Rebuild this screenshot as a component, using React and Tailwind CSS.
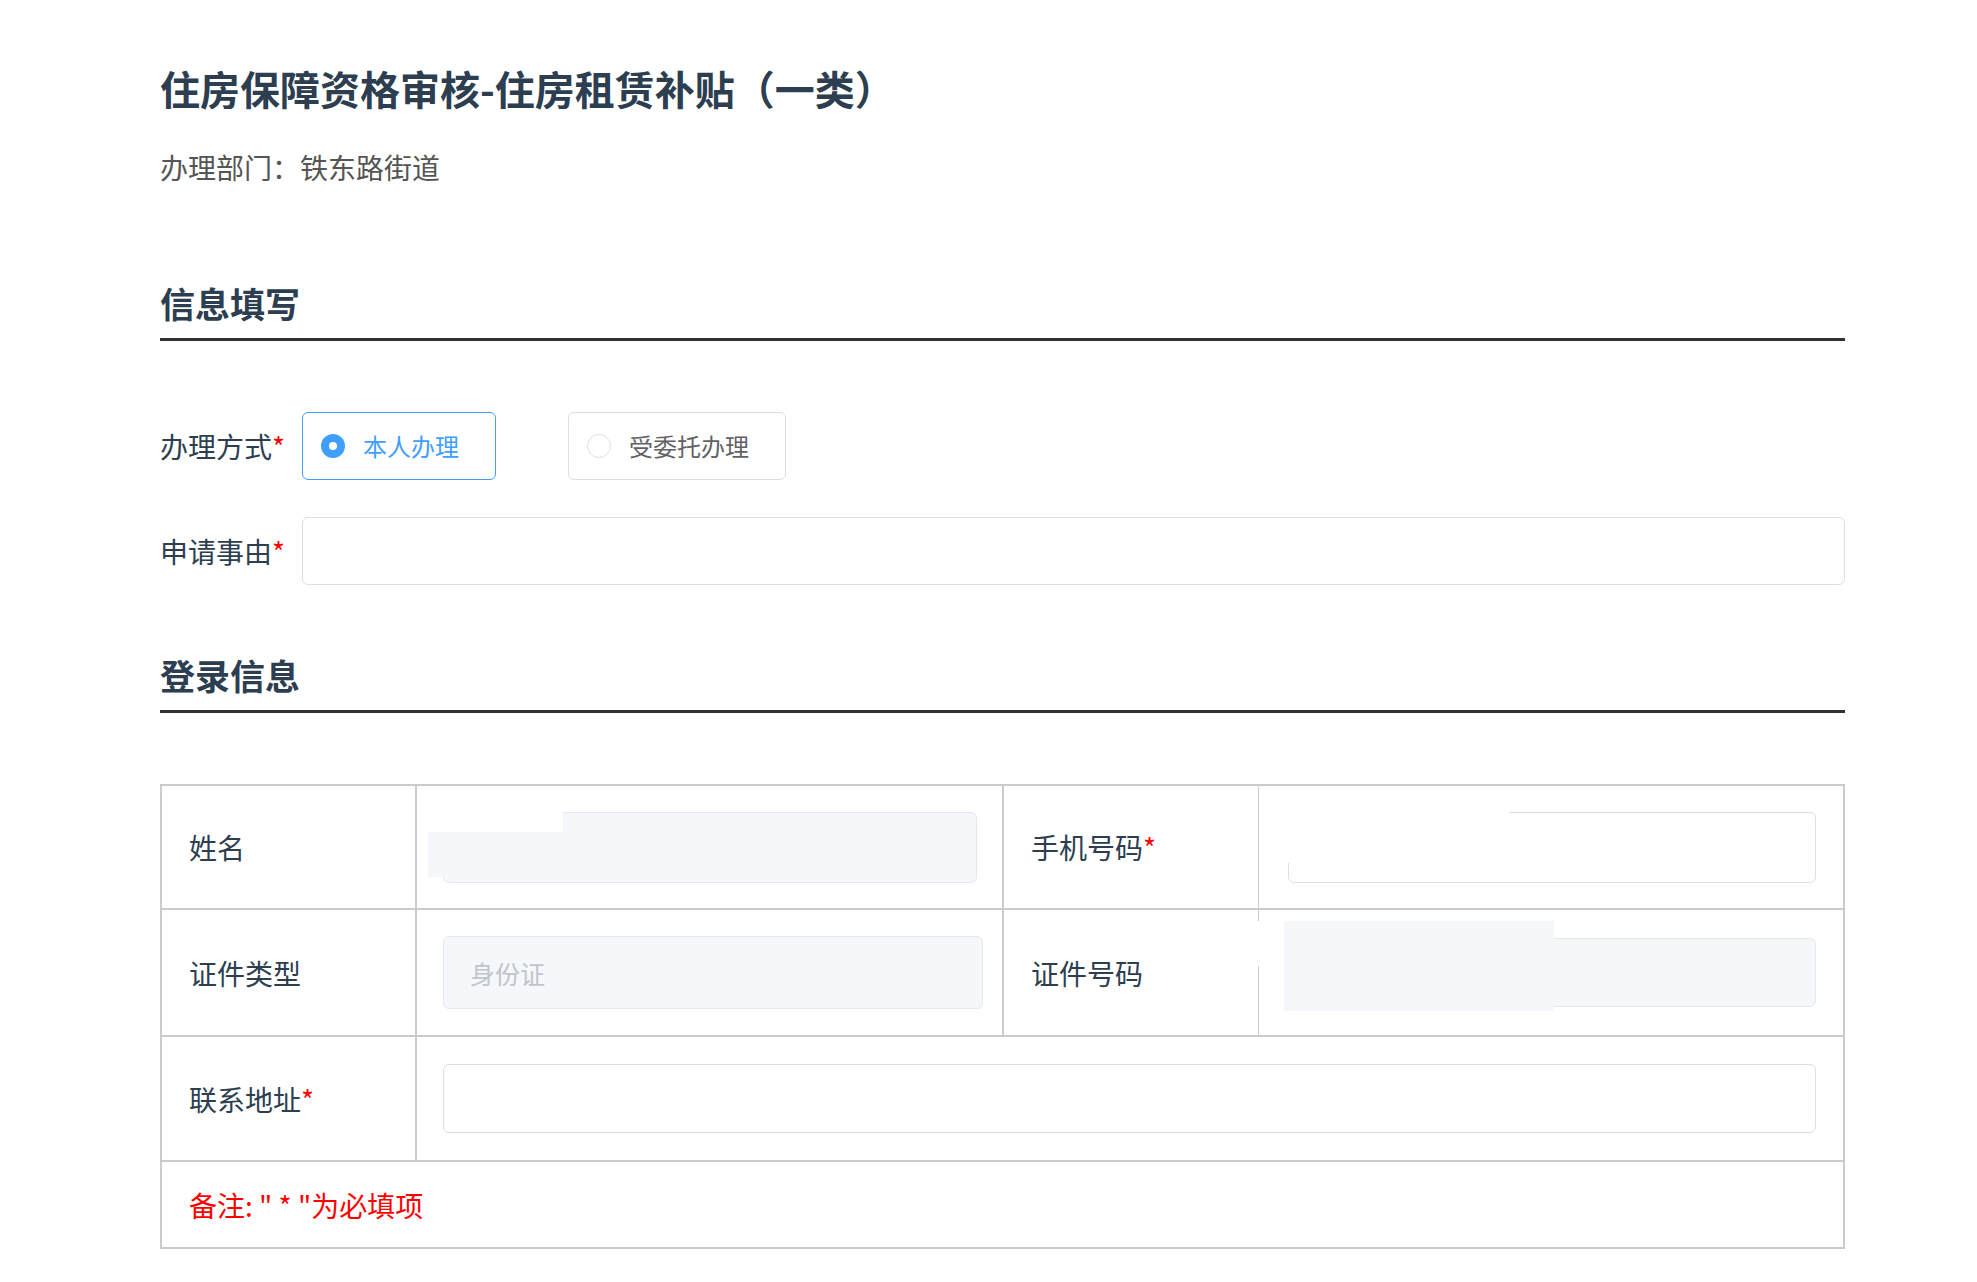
import React, { useState } from "react";

const Star = () => <span className="text-[#ff0000]">*</span>;

const App = () => {
  const [mode, setMode] = useState("self");
  const [reason, setReason] = useState("");
  const [phone, setPhone] = useState("");
  const [address, setAddress] = useState("");

  const modes = [
    { key: "self", label: "本人办理", w: "w-[194px]" },
    { key: "proxy", label: "受委托办理", w: "w-[218px]" },
  ];

  return (
    <div className="min-h-screen bg-white font-['Noto_Sans_CJK_SC','Noto_Sans',sans-serif] text-[#2c3e50]">
      <div className="ml-[160px] w-[1685px] pt-[68px] pb-[40px]">
        <h1 className="text-[40px] leading-[40px] font-bold">住房保障资格审核-住房租赁补贴（一类）</h1>
        <p className="mt-[45px] text-[28px] leading-[28px] text-[#555]">办理部门：铁东路街道</p>

        <div className="mt-[104px] border-b-[3px] border-[#303133] pb-[18px]">
          <h2 className="text-[35px] leading-[35px] font-bold">信息填写</h2>
        </div>

        <div className="mt-[71px] flex items-center">
          <div className="w-[142px] text-[28px] leading-[28px]">办理方式<Star /></div>
          <div className="flex gap-[72px]">
            {modes.map((item) => {
              const on = mode === item.key;
              return (
                <button
                  key={item.key}
                  onClick={() => setMode(item.key)}
                  className={
                    on
                      ? `${item.w} h-[68px] flex items-center pl-[18px] rounded-[6px] border border-[#409eff] bg-white`
                      : `${item.w} h-[68px] flex items-center pl-[18px] rounded-[6px] border border-[#dcdfe6] bg-white`
                  }
                >
                  {on ? (
                    <span className="w-[24px] h-[24px] rounded-full bg-[#409eff] flex items-center justify-center">
                      <span className="w-[8px] h-[8px] rounded-full bg-white"></span>
                    </span>
                  ) : (
                    <span className="w-[24px] h-[24px] rounded-full border border-[#dcdfe6] bg-white"></span>
                  )}
                  <span className={on ? "ml-[18px] text-[24px] leading-[24px] text-[#409eff]" : "ml-[18px] text-[24px] leading-[24px] text-[#606266]"}>
                    {item.label}
                  </span>
                </button>
              );
            })}
          </div>
        </div>

        <div className="mt-[37px] flex items-center">
          <div className="w-[142px] text-[28px] leading-[28px]">申请事由<Star /></div>
          <input
            value={reason}
            onChange={(e) => setReason(e.target.value)}
            className="flex-1 h-[68px] rounded-[6px] border border-[#dcdfe6] px-[20px] text-[24px] outline-none"
          />
        </div>

        <div className="mt-[72px] border-b-[3px] border-[#303133] pb-[18px]">
          <h2 className="text-[35px] leading-[35px] font-bold">登录信息</h2>
        </div>

        <div className="mt-[71px] border-2 border-[#cbcbcb] grid grid-cols-[255px_587px_255px_1fr] text-[28px] leading-[28px]">
          {/* row 1 */}
          <div className="h-[124px] border-r-2 border-b-2 border-[#cbcbcb] flex items-center pl-[27px]">姓名</div>
          <div className="relative h-[124px] border-r-2 border-b-2 border-[#cbcbcb] flex items-center pl-[26px] pr-[25px]">
            <div className="w-full h-[71px] rounded-[6px] border border-[#e4e7ed] bg-[#f5f7fa]"></div>
            <div className="absolute left-[11px] top-[18px] w-[135px] h-[28px] bg-white"></div>
            <div className="absolute left-[11px] top-[46px] w-[135px] h-[45px] bg-[#f5f7fa]"></div>
          </div>
          <div className="h-[124px] border-r border-b-2 border-[#cbcbcb] flex items-center pl-[27px]">手机号码<Star /></div>
          <div className="relative h-[124px] border-b-2 border-[#cbcbcb] flex items-center pl-[29px] pr-[27px]">
            <input
              value={phone}
              onChange={(e) => setPhone(e.target.value)}
              className="w-full h-[71px] rounded-[6px] border border-[#dcdfe6] px-[20px] text-[24px] outline-none"
            />
            <div className="absolute left-[22px] top-[18px] w-[228px] h-[59px] bg-white"></div>
          </div>

          {/* row 2 */}
          <div className="h-[127px] border-r-2 border-b-2 border-[#cbcbcb] flex items-center pl-[27px]">证件类型</div>
          <div className="h-[127px] border-r-2 border-b-2 border-[#cbcbcb] flex items-center pl-[26px]">
            <div className="w-[540px] h-[73px] rounded-[6px] border border-[#e4e7ed] bg-[#f5f7fa] flex items-center pl-[26px] text-[25px] text-[#c0c4cc]">身份证</div>
          </div>
          <div className="h-[127px] border-r border-b-2 border-[#cbcbcb] flex items-center pl-[27px]">证件号码</div>
          <div className="relative h-[127px] border-b-2 border-[#cbcbcb] flex items-center pl-[29px] pr-[27px]">
            <div className="w-full h-[69px] rounded-[6px] border border-[#e4e7ed] bg-[#f5f7fa]"></div>
            <div className="absolute left-[-2px] top-[11px] w-[27px] h-[45px] bg-white"></div>
            <div className="absolute left-[25px] top-[11px] w-[270px] h-[90px] bg-[#f5f7fa]"></div>
          </div>

          {/* row 3 */}
          <div className="h-[125px] border-r-2 border-b-2 border-[#cbcbcb] flex items-center pl-[27px]">联系地址<Star /></div>
          <div className="col-span-3 h-[125px] border-b-2 border-[#cbcbcb] flex items-center pl-[26px] pr-[27px]">
            <input
              value={address}
              onChange={(e) => setAddress(e.target.value)}
              className="w-full h-[69px] rounded-[6px] border border-[#dcdfe6] px-[20px] text-[24px] outline-none"
            />
          </div>

          {/* note */}
          <div className="col-span-4 h-[85px] flex items-center pl-[27px] text-[#ff0000]">备注: " * "为必填项</div>
        </div>
      </div>
    </div>
  );
};

export default App;
